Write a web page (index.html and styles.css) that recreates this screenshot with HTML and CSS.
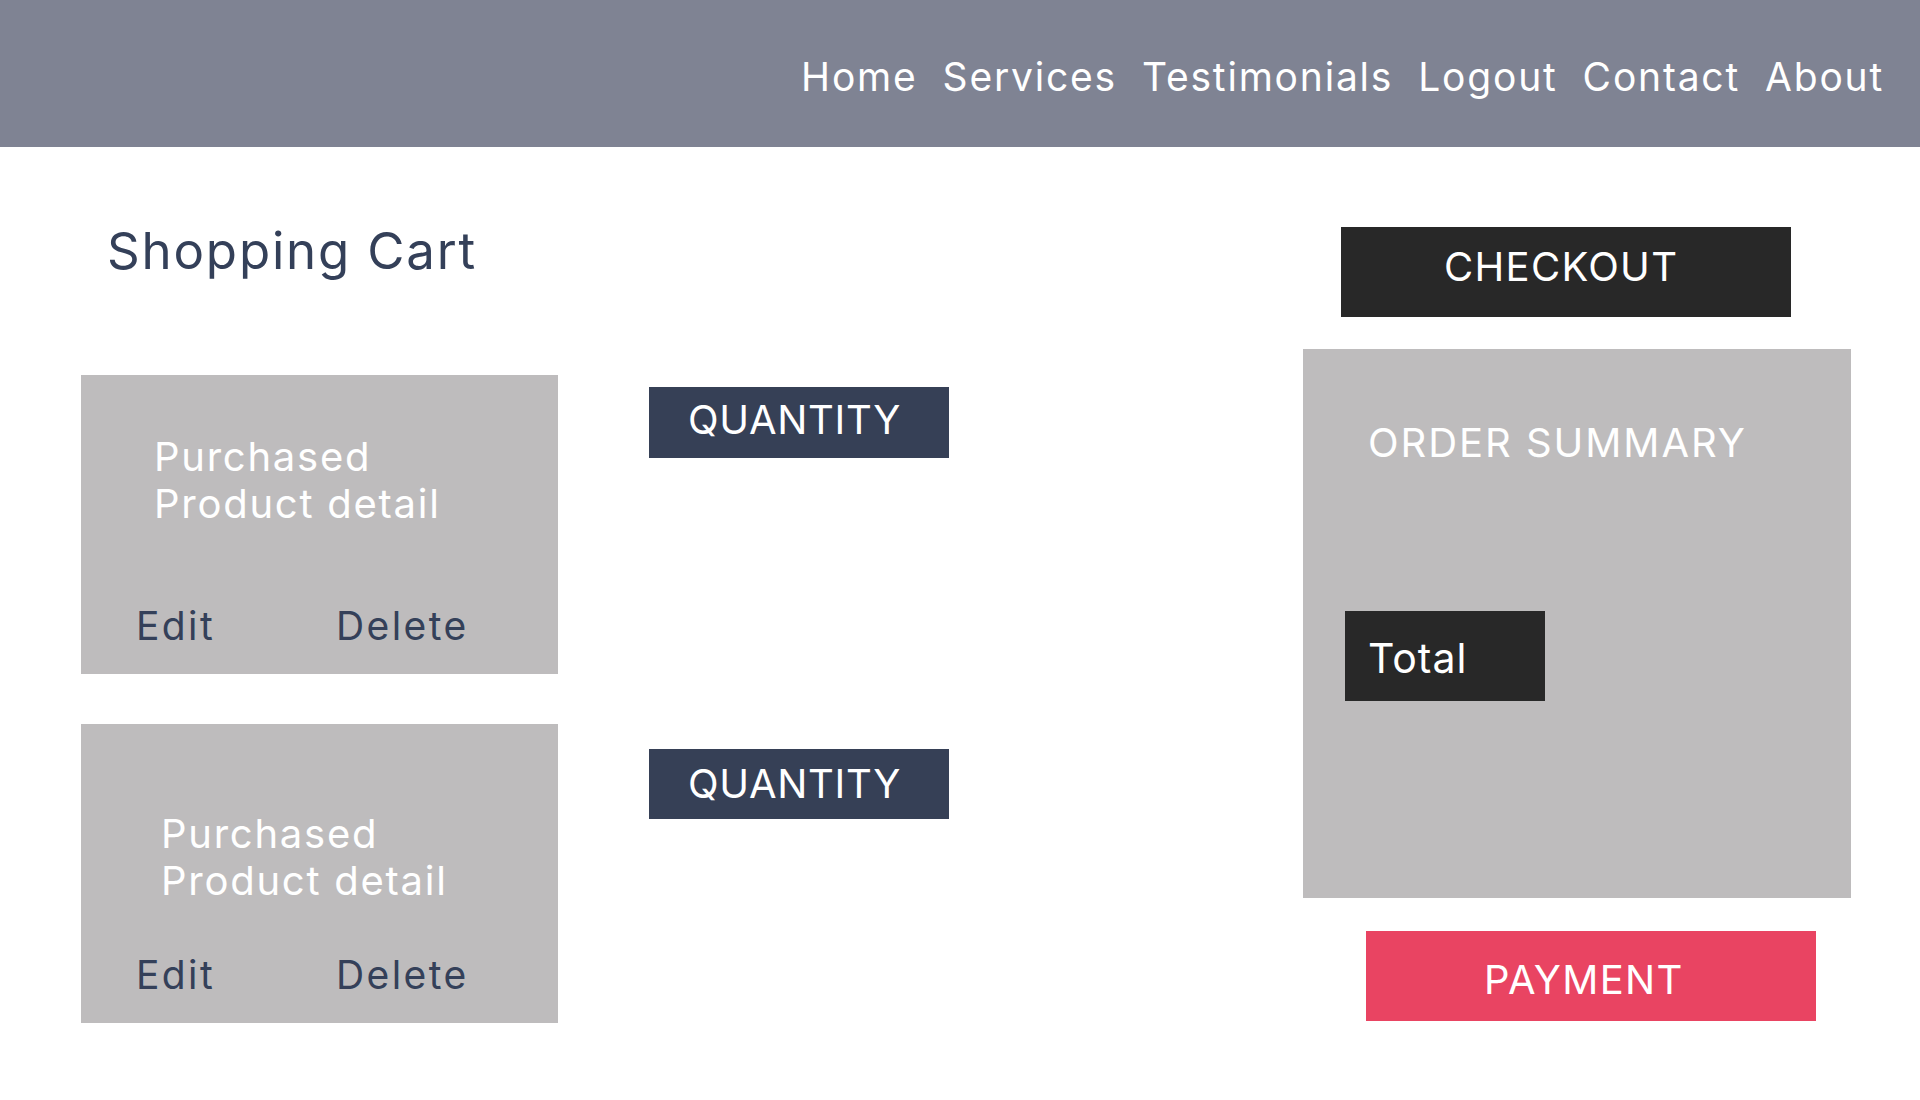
FILE: index.html
```html
<!DOCTYPE html>
<html lang="en">
<head>
<meta charset="utf-8">
<title>Shopping Cart</title>
<link rel="stylesheet" href="styles.css">
</head>
<body>
<header class="topbar">
  <nav class="nav">
    <a class="nav-link" href="#">Home</a>
    <a class="nav-link" href="#">Services</a>
    <a class="nav-link" href="#">Testimonials</a>
    <a class="nav-link" href="#">Logout</a>
    <a class="nav-link" href="#">Contact</a>
    <a class="nav-link" href="#">About</a>
  </nav>
</header>
<main class="page">
  <section class="cart">
    <h1 class="cart-title">Shopping Cart</h1>
    <div class="cart-list">
      <article class="item item-first">
        <p class="item-detail">Purchased<br>Product detail</p>
        <div class="item-actions">
          <span class="action action-edit">Edit</span>
          <span class="action">Delete</span>
        </div>
      </article>
      <article class="item item-second">
        <p class="item-detail">Purchased<br>Product detail</p>
        <div class="item-actions">
          <span class="action action-edit">Edit</span>
          <span class="action">Delete</span>
        </div>
      </article>
    </div>
  </section>
  <section class="qty-col">
    <div class="qty">QUANTITY</div>
    <div class="qty qty-second">QUANTITY</div>
  </section>
  <aside class="summary-col">
    <a class="checkout" href="#">CHECKOUT</a>
    <div class="summary">
      <h2 class="summary-title">ORDER SUMMARY</h2>
      <div class="total">Total</div>
    </div>
    <a class="payment" href="#">PAYMENT</a>
  </aside>
</main>
</body>
</html>
```

FILE: styles.css
```css
* {
  box-sizing: border-box;
}

html, body {
  margin: 0;
  padding: 0;
  background: #ffffff;
}

body {
  font-family: Inter, "Open Sans", "DejaVu Sans", sans-serif;
  font-weight: 400;
  color: #344059;
  width: 1920px;
  height: 1100px;
  overflow: hidden;
}

/* ---------- header ---------- */
.topbar {
  height: 147px;
  background: #7f8393;
  display: flex;
  justify-content: flex-end;
  align-items: flex-start;
  padding: 57px 36px 0 0;
}

.nav {
  display: flex;
  gap: 25px;
}

.nav-link {
  color: #ffffff;
  text-decoration: none;
  font-size: 39px;
  line-height: 1;
  letter-spacing: 1.8px;
}

/* ---------- main layout ---------- */
.page {
  display: flex;
  align-items: flex-start;
  padding: 0 69px 0 81px;
}

/* ---------- cart column ---------- */
.cart {
  width: 477px;
  display: flex;
  flex-direction: column;
}

.cart-title {
  margin: 78px 0 0 0;
  padding-left: 26px;
  font-size: 51px;
  line-height: 1;
  font-weight: 400;
  letter-spacing: 1.8px;
  color: #344059;
}

.cart-list {
  margin-top: 99px;
  display: flex;
  flex-direction: column;
  gap: 50px;
}

.item {
  height: 299px;
  background: #bebcbd;
  display: flex;
  flex-direction: column;
  padding: 58px 0 29px 0;
}

.item-second {
  padding-top: 86px;
}

.item-detail {
  margin: 0 0 0 73px;
  color: #ffffff;
  font-size: 40px;
  line-height: 47px;
  letter-spacing: 1.75px;
}

.item-second .item-detail {
  margin-left: 80px;
}

.item-actions {
  margin-top: auto;
  margin-left: 55px;
  display: flex;
}

.action {
  font-size: 39px;
  line-height: 1;
  letter-spacing: 2.4px;
  color: #344059;
}

.action-edit {
  width: 200px;
}

/* ---------- quantity column ---------- */
.qty-col {
  margin-left: 91px;
  margin-top: 240px;
  display: flex;
  flex-direction: column;
  gap: 291px;
}

.qty {
  width: 300px;
  height: 71px;
  background: #364056;
  color: #ffffff;
  font-size: 40px;
  line-height: 1;
  padding: 13px 0 0 39px;
  letter-spacing: 0.7px;
}

.qty-second {
  height: 70px;
  padding-top: 15px;
}

/* ---------- summary column ---------- */
.summary-col {
  margin-left: auto;
  width: 548px;
  display: flex;
  flex-direction: column;
  align-items: flex-start;
}

.checkout,
.payment {
  display: block;
  width: 450px;
  height: 90px;
  font-size: 40px;
  line-height: 1;
  color: #ffffff;
  text-decoration: none;
}

.checkout {
  margin: 80px 0 0 38px;
  background: #282828;
  padding: 20px 0 0 103px;
  letter-spacing: 1.3px;
}

.summary {
  margin-top: 32px;
  width: 548px;
  height: 549px;
  background: #bebcbd;
  padding: 74px 0 0 0;
  display: flex;
  flex-direction: column;
  align-items: flex-start;
}

.summary-title {
  margin: 0 0 0 65px;
  font-size: 40px;
  line-height: 1;
  font-weight: 400;
  color: #ffffff;
  letter-spacing: 1.95px;
}

.total {
  margin: 148px 0 0 42px;
  width: 200px;
  height: 90px;
  background: #282828;
  color: #ffffff;
  font-size: 41px;
  line-height: 1;
  padding: 27px 0 0 23px;
  letter-spacing: 1px;
}

.payment {
  margin: 33px 0 0 63px;
  background: #e94462;
  padding: 29px 0 0 118px;
  letter-spacing: 1.3px;
}
```
